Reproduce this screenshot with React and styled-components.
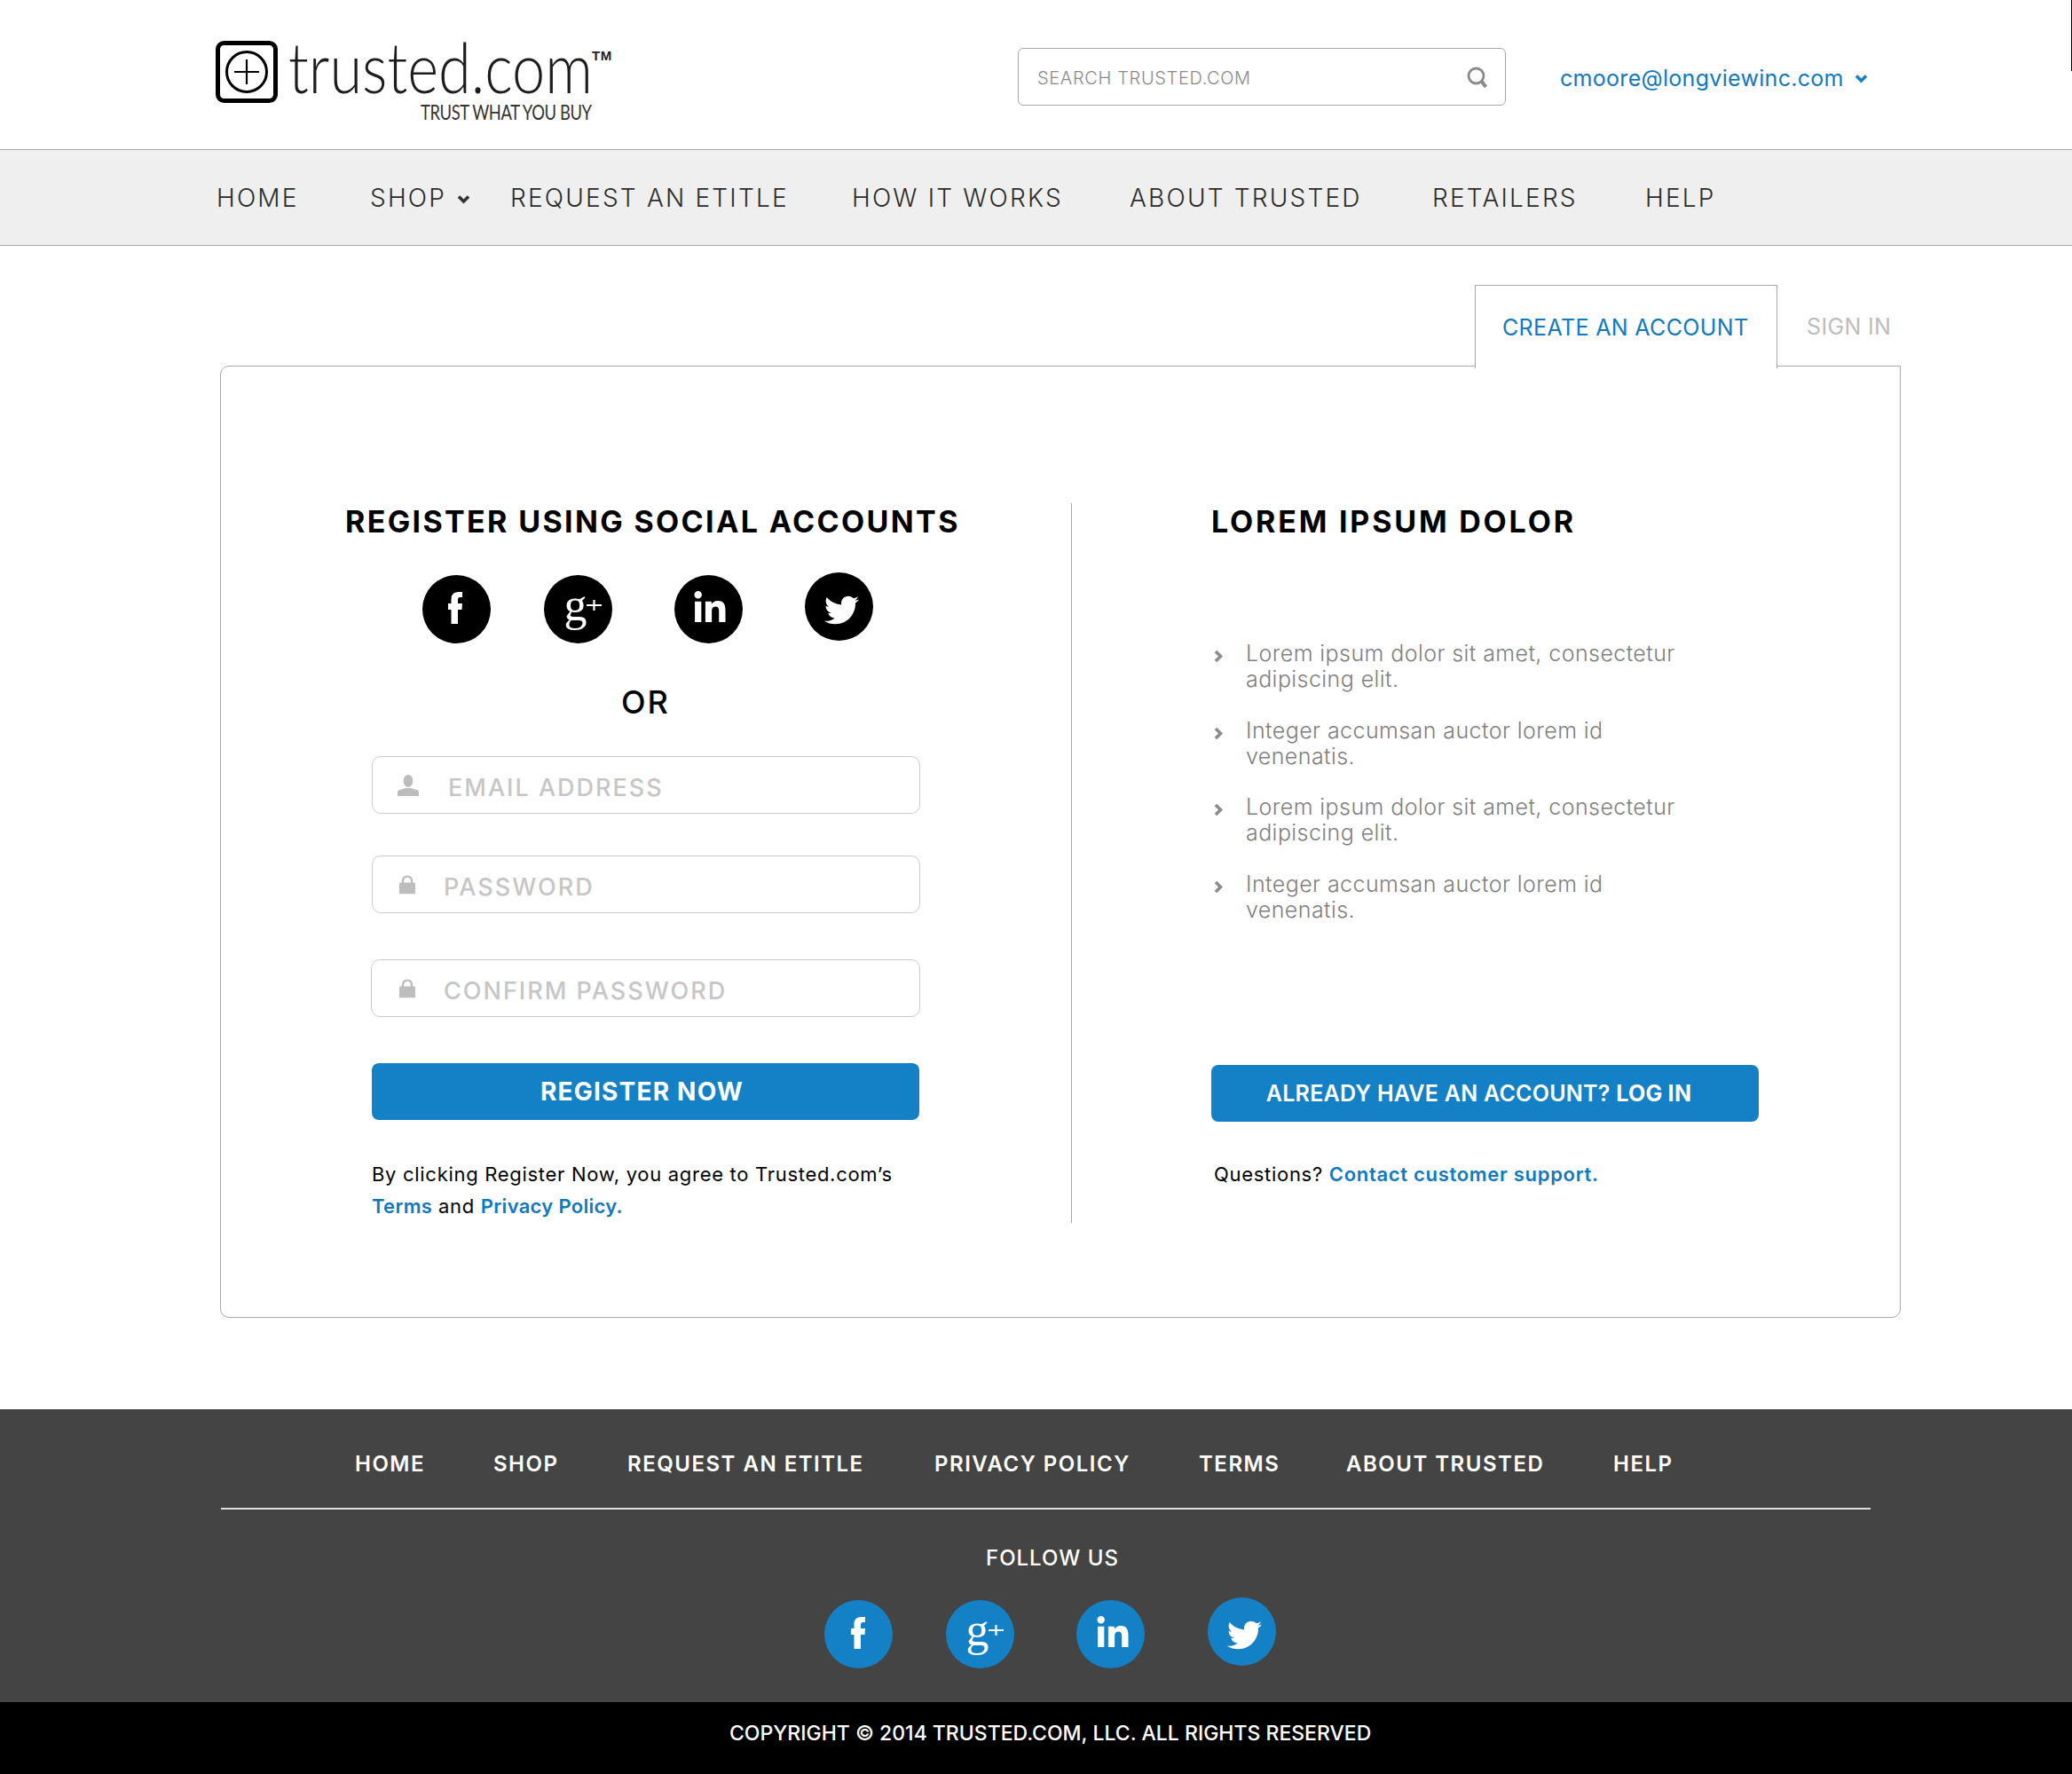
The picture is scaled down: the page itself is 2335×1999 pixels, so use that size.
import styled, { createGlobalStyle } from "styled-components";
import { FaLinkedinIn, FaTwitter } from "react-icons/fa";

const BLUE = "#1480c5";
const LINK = "#1279bf";
const FONT = `Inter, "Liberation Sans", sans-serif`;

const GlobalStyle = createGlobalStyle`
  html, body {
    margin: 0;
    padding: 0;
    background: #fff;
    font-family: ${FONT};
  }
  * {
    box-sizing: border-box;
  }
  a {
    text-decoration: none;
  }
`;

function Chevron({ className, color = "#333" }) {
  return (
    <svg className={className} viewBox="0 0 15 11" width="15" height="11">
      <path d="M2 2.5 L7.5 8 L13 2.5" fill="none" stroke={color} strokeWidth="3.6" />
    </svg>
  );
}

function FacebookF() {
  return (
    <svg viewBox="0 0 16 36" width="16" height="36" fill="#fff">
      <path d="M11 36 V20 H15.5 L16 13 H11 V9 Q11 6 13.5 6 H16 V0 H12 Q3.5 0 3.5 8 V13 H0 V20 H3.5 V36 Z" />
    </svg>
  );
}

function GooglePlus() {
  return (
    <svg viewBox="0 0 41 36" width="41" height="36" overflow="visible">
      <text x="0" y="24" fontFamily="Liberation Serif, serif" fontSize="52" fill="#fff">
        g
      </text>
      <path d="M25.5 7 H42.5 M34 1 V13" stroke="#fff" strokeWidth="2.2" />
    </svg>
  );
}

const SOCIALS = [
  { name: "facebook", icon: <FacebookF />, gap: 0, raise: 0, dx: -1, dy: -1 },
  { name: "google", icon: <GooglePlus />, gap: 60, raise: 0, dx: 4.5, dy: 7 },
  { name: "linkedin", icon: <FaLinkedinIn size={40} />, gap: 70, raise: 0, dx: 2, dy: 0 },
  { name: "twitter", icon: <FaTwitter size={39} />, gap: 70.5, raise: 3, dx: 3, dy: 4 },
];

function SocialLinks({ color }) {
  return (
    <SocialRow>
      {SOCIALS.map((s) => (
        <SocialLink key={s.name} href="#" $color={color} $gap={s.gap} $raise={s.raise} $dx={s.dx} $dy={s.dy}>
          {s.icon}
        </SocialLink>
      ))}
    </SocialRow>
  );
}

function UserIcon() {
  return (
    <svg viewBox="0 0 24 24" width="24" height="24">
      <ellipse cx="12" cy="7" rx="5.4" ry="7" fill="#bdbdbd" />
      <path d="M0 24 V19.5 Q0 17.5 3 17 L9 15 H15 L21 17 Q24 17.5 24 19.5 V24 Z" fill="#bdbdbd" />
    </svg>
  );
}

function LockIcon() {
  return (
    <svg viewBox="0 0 18 21" width="18" height="21">
      <path d="M4 9 V6 a5 5 0 0 1 10 0 V9" fill="none" stroke="#bdbdbd" strokeWidth="2.4" />
      <rect x="0" y="8" width="18" height="13" rx="1" fill="#bdbdbd" />
    </svg>
  );
}

function SearchIcon() {
  return (
    <svg viewBox="0 0 24 24" width="24" height="24">
      <circle cx="10.5" cy="10.5" r="8.5" fill="none" stroke="#8a8a8a" strokeWidth="2.8" />
      <path d="M16.5 16.5 L21.5 23" stroke="#8a8a8a" strokeWidth="4" />
    </svg>
  );
}

const NAV_ITEMS = ["REQUEST AN ETITLE", "HOW IT WORKS", "ABOUT TRUSTED", "RETAILERS", "HELP"];
const FOOTER_ITEMS = ["HOME", "SHOP", "REQUEST AN ETITLE", "PRIVACY POLICY", "TERMS", "ABOUT TRUSTED", "HELP"];
const BULLETS = [
  "Lorem ipsum dolor sit amet, consectetur adipiscing elit.",
  "Integer accumsan auctor lorem id venenatis.",
  "Lorem ipsum dolor sit amet, consectetur adipiscing elit.",
  "Integer accumsan auctor lorem id venenatis.",
];

function App() {
  return (
    <>
      <GlobalStyle />
      <Page>
        <Header>
          <Logo>
            <LogoMark viewBox="0 0 70 70" width="70" height="70">
              <rect x="2.5" y="2.5" width="65" height="65" rx="7" fill="none" stroke="#000" strokeWidth="5" />
              <circle cx="35" cy="35" r="22.5" fill="none" stroke="#000" strokeWidth="3" />
              <path d="M21 35 H49 M35 21 V49" stroke="#000" strokeWidth="2.2" />
            </LogoMark>
            <LogoWords>
              <LogoLine>
                <LogoName>trusted.com</LogoName>
                <TradeMark>TM</TradeMark>
              </LogoLine>
              <Tagline>TRUST WHAT YOU BUY</Tagline>
            </LogoWords>
          </Logo>
          <SearchBox>
            <SearchInput placeholder="SEARCH TRUSTED.COM" />
            <SearchIcon />
          </SearchBox>
          <Account href="#">
            cmoore@longviewinc.com
            <Chevron color={BLUE} />
          </Account>
        </Header>

        <NavBar>
          <NavItem href="#">HOME</NavItem>
          <NavItem href="#">
            SHOP
            <Chevron />
          </NavItem>
          {NAV_ITEMS.map((item) => (
            <NavItem key={item} href="#">
              {item}
            </NavItem>
          ))}
        </NavBar>

        <Main>
          <Tabs>
            <Tab href="#" $active>
              CREATE AN ACCOUNT
            </Tab>
            <Tab href="#">SIGN IN</Tab>
          </Tabs>
          <Card>
            <LeftColumn>
              <Heading $spacing={2.35}>REGISTER USING SOCIAL ACCOUNTS</Heading>
              <SocialSlot>
                <SocialLinks color="#000" />
              </SocialSlot>
              <OrLabel>OR</OrLabel>
              <Form>
                <Field>
                  <FieldIcon $left={28}>
                    <UserIcon />
                  </FieldIcon>
                  <FieldInput $left={86} placeholder="EMAIL ADDRESS" />
                </Field>
                <Field $top={47}>
                  <FieldIcon $left={30}>
                    <LockIcon />
                  </FieldIcon>
                  <FieldInput $left={81} placeholder="PASSWORD" />
                </Field>
                <Field $top={52} $shift={-1}>
                  <FieldIcon $left={31}>
                    <LockIcon />
                  </FieldIcon>
                  <FieldInput $left={82} placeholder="CONFIRM PASSWORD" />
                </Field>
                <BlueButton $top={52} $size={28} $weight={700} $spacing={1.2} $trim={8}>
                  REGISTER NOW
                </BlueButton>
                <SmallPrint>
                  By clicking Register Now, you agree to Trusted.com’s
                  <br />
                  <BlueLink href="#">Terms</BlueLink> and <BlueLink href="#">Privacy Policy.</BlueLink>
                </SmallPrint>
              </Form>
            </LeftColumn>

            <RightColumn>
              <Heading $spacing={2.8}>LOREM IPSUM DOLOR</Heading>
              <BulletList>
                {BULLETS.map((text, i) => (
                  <Bullet key={i}>
                    <BulletMark viewBox="0 0 11 15" width="11" height="15">
                      <path d="M2 2 L7.5 7.5 L2 13" fill="none" stroke="#8c8c8c" strokeWidth="3.6" />
                    </BulletMark>
                    {text}
                  </Bullet>
                ))}
              </BulletList>
              <BlueButton $top={160} $size={25} $weight={600} $spacing={0.25} $trim={14}>
                ALREADY HAVE AN ACCOUNT? <strong>LOG IN</strong>
              </BlueButton>
              <Questions>
                Questions? <BlueLink href="#">Contact customer support.</BlueLink>
              </Questions>
            </RightColumn>
          </Card>
        </Main>

        <Footer>
          <FooterNav>
            {FOOTER_ITEMS.map((item) => (
              <FooterLink key={item} href="#">
                {item}
              </FooterLink>
            ))}
          </FooterNav>
          <FooterRule />
          <FollowUs>FOLLOW US</FollowUs>
          <FooterSocial>
            <SocialLinks color={BLUE} />
          </FooterSocial>
        </Footer>
        <Copyright>COPYRIGHT © 2014 TRUSTED.COM, LLC. ALL RIGHTS RESERVED</Copyright>
      </Page>
    </>
  );
}

const Page = styled.div`
  width: 2335px;
  height: 1999px;
  overflow: hidden;
`;

const Header = styled.header`
  position: relative;
  height: 168px;
  padding: 45px 0 0 243px;
  display: grid;
  grid-template-columns: 904px 611px auto;
  align-items: start;
  &::after {
    content: "";
    position: absolute;
    top: 0;
    right: 0;
    width: 1px;
    height: 80px;
    background: #000;
  }
`;

const Logo = styled.div`
  display: flex;
  align-items: flex-start;
`;

const LogoMark = styled.svg`
  flex: none;
  margin-top: 1px;
`;

const LogoWords = styled.div`
  margin: -3px 0 0 12px;
  width: 370px;
`;

const LogoLine = styled.div`
  display: flex;
  align-items: flex-start;
  height: 66px;
`;

const LogoName = styled.span`
  display: block;
  width: 342px;
  font-family: Lato, sans-serif;
  font-weight: 300;
  font-size: 78px;
  line-height: 66px;
  color: #1c1c1c;
  white-space: nowrap;
  transform: scaleX(0.855);
  transform-origin: left center;
`;

const TradeMark = styled.span`
  margin-top: 13px;
  font-family: "Liberation Sans", sans-serif;
  font-weight: 700;
  font-size: 15px;
  line-height: 15px;
  letter-spacing: 0.5px;
  color: #222;
`;

const Tagline = styled.div`
  margin: 6px 0 0 149px;
  font-family: Lato, sans-serif;
  font-size: 23px;
  line-height: 24px;
  letter-spacing: -0.5px;
  color: #333;
  white-space: nowrap;
  transform: scaleX(0.8);
  transform-origin: left center;
`;

const SearchBox = styled.div`
  margin-top: 9px;
  width: 550px;
  height: 65px;
  padding: 0 19px 0 21px;
  display: flex;
  align-items: center;
  border: 1.5px solid #a6a6a6;
  border-radius: 6px;
`;

const SearchInput = styled.input`
  flex: 1;
  min-width: 0;
  border: 0;
  outline: 0;
  padding: 2px 0 0;
  font-family: ${FONT};
  font-size: 20px;
  font-weight: 300;
  letter-spacing: 0.65px;
  &::placeholder {
    color: #8a8a8a;
    opacity: 1;
  }
`;

const Account = styled.a`
  margin-top: 25px;
  display: flex;
  align-items: center;
  gap: 12px;
  font-size: 25px;
  line-height: 36px;
  letter-spacing: 0.3px;
  color: ${LINK};
  white-space: nowrap;
`;

const NavBar = styled.nav`
  height: 109px;
  padding-left: 244px;
  display: grid;
  grid-template-columns: 173px 158px 385px 313px 341px 240px auto;
  align-items: center;
  background: #efefef;
  border-top: 1.5px solid #a8a8a8;
  border-bottom: 1.5px solid #a8a8a8;
`;

const NavItem = styled.a`
  display: flex;
  align-items: center;
  gap: 12px;
  font-size: 28px;
  font-weight: 300;
  letter-spacing: 2.2px;
  color: #2c2c2c;
  white-space: nowrap;
  svg {
    margin-top: 4px;
  }
`;

const Main = styled.main`
  padding: 44px 0 0 248px;
  height: 1311px;
`;

const Tabs = styled.div`
  width: 1894px;
  height: 92px;
  position: relative;
  z-index: 1;
  display: flex;
  justify-content: flex-end;
  margin-bottom: -1.5px;
`;

const Tab = styled.a`
  width: ${(p) => (p.$active ? "341px" : "139px")};
  height: 93.5px;
  padding-top: 31px;
  padding-left: ${(p) => (p.$active ? "30px" : "33px")};
  font-size: 25px;
  line-height: 32px;
  font-weight: 400;
  letter-spacing: 0.35px;
  white-space: nowrap;
  color: ${(p) => (p.$active ? LINK : "#bdbdbd")};
  background: ${(p) => (p.$active ? "#fff" : "transparent")};
  border: ${(p) => (p.$active ? "1.5px solid #a8a8a8" : "0")};
  border-bottom: 0;
`;

const Card = styled.section`
  width: 1894px;
  height: 1073px;
  padding: 154px 0 0 140px;
  display: flex;
  align-items: flex-start;
  border: 1.5px solid #a8a8a8;
  border-radius: 10px 0 10px 10px;
`;

const LeftColumn = styled.div`
  width: 819px;
  height: 811px;
  border-right: 1.5px solid #a8a8a8;
`;

const Heading = styled.h2`
  margin: 0;
  font-size: 34px;
  line-height: 42px;
  font-weight: 700;
  letter-spacing: ${(p) => p.$spacing}px;
  color: #000;
  white-space: nowrap;
`;

const SocialSlot = styled.div`
  margin: 39px 0 0 86.5px;
`;

const SocialRow = styled.div`
  display: flex;
  align-items: flex-start;
`;

const SocialLink = styled.a`
  flex: none;
  width: 77px;
  height: 77px;
  margin-left: ${(p) => p.$gap}px;
  margin-top: ${(p) => -p.$raise}px;
  display: flex;
  align-items: center;
  justify-content: center;
  border-radius: 50%;
  background: ${(p) => p.$color};
  color: #fff;
  svg {
    transform: translate(${(p) => p.$dx}px, ${(p) => p.$dy}px);
  }
`;

const OrLabel = styled.div`
  margin: 46.5px 0 0 311px;
  font-size: 36px;
  line-height: 40px;
  font-weight: 500;
  letter-spacing: 2px;
  color: #000;
`;

const Form = styled.div`
  margin: 41px 0 0 30px;
  width: 618px;
  display: flex;
  flex-direction: column;
`;

const Field = styled.label`
  height: 65px;
  margin-top: ${(p) => p.$top || 0}px;
  margin-left: ${(p) => p.$shift || 0}px;
  display: flex;
  align-items: center;
  position: relative;
  border: 1.5px solid #cbcbcb;
  border-radius: 10px;
`;

const FieldIcon = styled.span`
  position: absolute;
  left: ${(p) => p.$left}px;
  top: 50%;
  transform: translateY(-50%);
  display: flex;
`;

const FieldInput = styled.input`
  width: 100%;
  border: 0;
  outline: 0;
  padding: 5px 0 0 ${(p) => p.$left - 1}px;
  background: transparent;
  font-family: ${FONT};
  font-size: 27px;
  font-weight: 500;
  letter-spacing: 2px;
  &::placeholder {
    color: #c6c6c6;
    opacity: 1;
  }
`;

const BlueButton = styled.button`
  width: 617px;
  height: 64px;
  margin-top: ${(p) => p.$top}px;
  padding: 0 ${(p) => p.$trim}px 0 0;
  border: 0;
  border-radius: 8px;
  background: ${BLUE};
  color: #fff;
  font-family: ${FONT};
  font-size: ${(p) => p.$size}px;
  font-weight: ${(p) => p.$weight};
  letter-spacing: ${(p) => p.$spacing}px;
  strong {
    font-weight: 700;
  }
`;

const SmallPrint = styled.p`
  margin: 42.5px 0 0;
  font-size: 22px;
  line-height: 36px;
  font-weight: 400;
  letter-spacing: 0.7px;
  color: #000;
  white-space: nowrap;
  a {
    letter-spacing: 0.3px;
  }
`;

const BlueLink = styled.a`
  color: ${LINK};
  font-weight: 600;
`;

const RightColumn = styled.div`
  padding-left: 157px;
  display: flex;
  flex-direction: column;
  align-items: flex-start;
`;

const BulletList = styled.ul`
  list-style: none;
  margin: 113.5px 0 0;
  padding: 0;
`;

const Bullet = styled.li`
  position: relative;
  width: 530px;
  padding-left: 39px;
  margin-bottom: 28.5px;
  font-size: 25px;
  line-height: 29px;
  font-weight: 300;
  letter-spacing: 0.42px;
  color: #808080;
  &:last-child {
    margin-bottom: 0;
  }
`;

const BulletMark = styled.svg`
  position: absolute;
  left: 3px;
  top: 10px;
`;

const Questions = styled.p`
  margin: 41px 0 0 3px;
  font-size: 22px;
  line-height: 36px;
  letter-spacing: 0.7px;
  color: #000;
  white-space: nowrap;
`;

const Footer = styled.footer`
  height: 330px;
  background: #444;
  color: #fff;
  padding-top: 44px;
`;

const FooterNav = styled.div`
  padding-left: 400px;
  display: grid;
  grid-template-columns: 156px 151px 346px 298px 166px 301px auto;
`;

const FooterLink = styled.a`
  font-size: 24px;
  line-height: 36px;
  font-weight: 600;
  letter-spacing: 1.5px;
  color: #fff;
  white-space: nowrap;
`;

const FooterRule = styled.hr`
  width: 1859px;
  height: 2px;
  margin: 31px 0 0 249px;
  border: 0;
  background: #ddd;
`;

const FollowUs = styled.div`
  margin: 37px 0 0 1111px;
  font-size: 24px;
  line-height: 36px;
  font-weight: 500;
  letter-spacing: 1px;
`;

const FooterSocial = styled.div`
  margin: 28.5px 0 0 929px;
`;

const Copyright = styled.div`
  height: 81px;
  padding: 18px 0 0 822px;
  background: #000;
  color: #fff;
  font-size: 23px;
  line-height: 34px;
  font-weight: 500;
  white-space: nowrap;
`;

export default App;
